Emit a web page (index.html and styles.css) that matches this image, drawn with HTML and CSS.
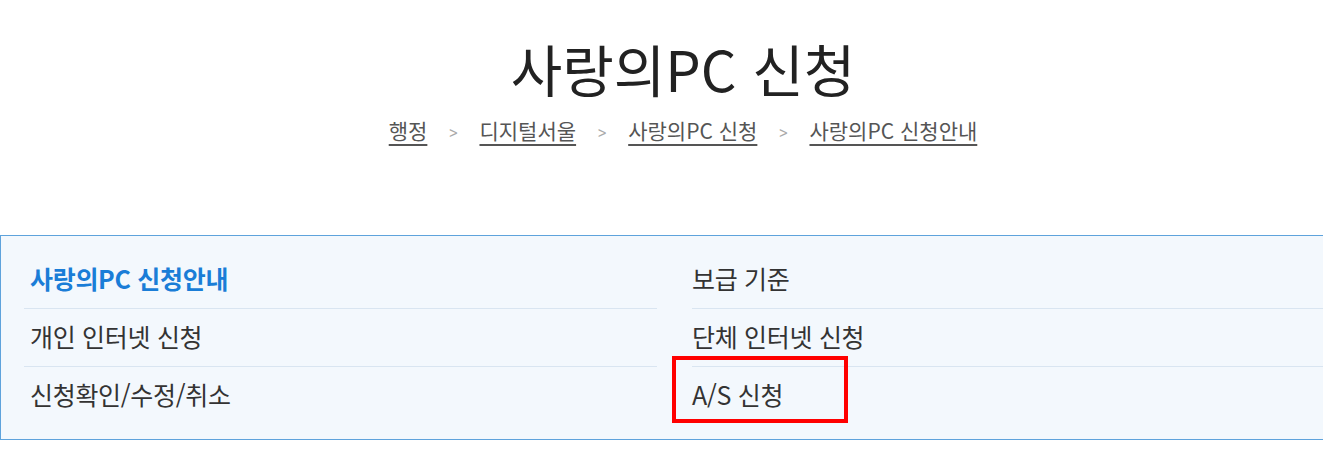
FILE: index.html
```html
<!DOCTYPE html>
<html lang="ko">
<head>
<meta charset="UTF-8" />
<meta name="viewport" content="width=device-width, initial-scale=1" />
<title>사랑의PC 신청</title>
<link rel="stylesheet" href="styles.css">
</head>
<body>
<div class="page">
  <header class="page-head">
    <h1>사랑의PC 신청</h1>
    <nav class="crumbs">
      <a href="#">행정</a>
      <span class="sep">&gt;</span>
      <a href="#">디지털서울</a>
      <span class="sep">&gt;</span>
      <a href="#">사랑의PC 신청</a>
      <span class="sep">&gt;</span>
      <a href="#">사랑의PC 신청안내</a>
    </nav>
  </header>

  <div class="tab-box">
    <ul class="tab-list">
      <li class="left active"><a href="#">사랑의PC 신청안내</a></li>
      <li class="right"><a href="#">보급 기준</a></li>
      <li class="left line"><a href="#">개인 인터넷 신청</a></li>
      <li class="right line"><a href="#">단체 인터넷 신청</a></li>
      <li class="left line"><a href="#">신청확인/수정/취소</a></li>
      <li class="right line mark"><a href="#">A/S 신청</a></li>
    </ul>
  </div>
</div>
</body>
</html>
```

FILE: styles.css
```css
html, body {
  margin: 0;
  padding: 0;
  overflow: hidden;
  background: #fff;
}
body {
  font-family: "Noto Sans CJK KR", "Noto Sans", sans-serif;
  color: #333;
}
.page {
  width: 1366px;
}
.page-head {
  text-align: center;
  padding-top: 28px;
}
.page-head h1 {
  margin: 0;
  font-size: 56px;
  font-weight: 400;
  color: #222;
  line-height: 80px;
}
.crumbs {
  margin-top: 6px;
  font-size: 21px;
  line-height: 32px;
  color: #555;
}
.crumbs a {
  color: #555;
  text-decoration: underline;
  text-underline-offset: 5px;
}
.crumbs .sep {
  display: inline-block;
  margin: 0 16px;
  color: #aaa;
  font-size: 15px;
  transform: scaleY(1.2);
}
.tab-box {
  margin-top: 86px;
  border: 1px solid #5ea3dc;
  background: #f3f8fd;
}
.tab-list {
  list-style: none;
  margin: 0;
  padding: 15px 23px 15px;
  display: grid;
  grid-template-columns: 633px 1fr;
  column-gap: 35px;
}
.tab-list li {
  height: 57px;
  display: flex;
  align-items: center;
  font-size: 25px;
  letter-spacing: -0.3px;
}
.tab-list li.line {
  border-top: 1px solid #d9e5f1;
}
.tab-list li.left {
  padding-left: 6px;
}
.tab-list a {
  margin-bottom: 4px;
  color: #333;
  text-decoration: none;
}
.tab-list li.active a {
  color: #1a7dd7;
  font-weight: 700;
}
.tab-list li.mark {
  position: relative;
}
.tab-list li.mark::after {
  content: "";
  position: absolute;
  left: -20px;
  top: -11px;
  width: 168px;
  height: 59px;
  border: 4px solid #f00;
}
```
